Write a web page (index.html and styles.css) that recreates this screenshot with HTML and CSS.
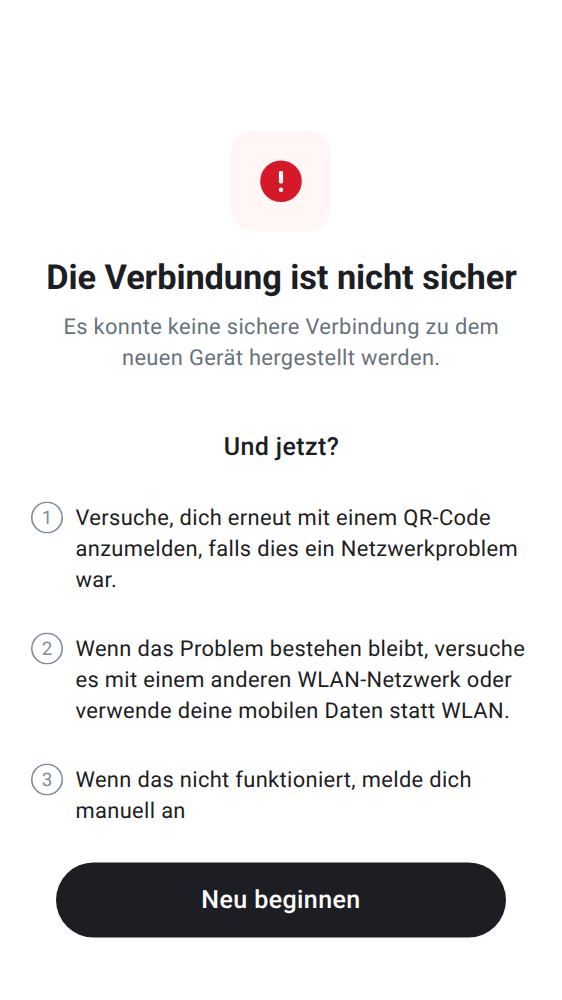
FILE: index.html
```
<!DOCTYPE html>
<html lang="de">
<head>
<meta charset="utf-8">
<title>Die Verbindung ist nicht sicher</title>
<link rel="stylesheet" href="styles.css">
</head>
<body>
<main class="screen">
  <div class="badge">
    <svg class="badge-icon" viewBox="0 0 42 42" aria-hidden="true">
      <circle cx="21" cy="21.2" r="20.8" fill="#d51928"/>
      <rect x="18.9" y="11" width="4.2" height="12.4" rx="1.4" fill="#fff"/>
      <circle cx="21" cy="29.7" r="2.2" fill="#fff"/>
    </svg>
  </div>
  <h1 class="title">Die Verbindung ist nicht sicher</h1>
  <p class="subtitle">Es konnte keine sichere Verbindung zu dem<br>neuen Gerät hergestellt werden.</p>
  <h2 class="question">Und jetzt?</h2>
  <ol class="steps">
    <li class="step"><span class="number">1</span><p class="text">Versuche, dich erneut mit einem QR-Code<br>anzumelden, falls dies ein Netzwerkproblem<br>war.</p></li>
    <li class="step"><span class="number">2</span><p class="text">Wenn das Problem bestehen bleibt, versuche<br>es mit einem anderen WLAN-Netzwerk oder<br>verwende deine mobilen Daten statt WLAN.</p></li>
    <li class="step"><span class="number">3</span><p class="text">Wenn das nicht funktioniert, melde dich<br>manuell an</p></li>
  </ol>
  <button class="restart">Neu beginnen</button>
</main>
</body>
</html>
```
FILE: styles.css
```
* { box-sizing: border-box; }
body { margin: 0; background: #fff; color: #1d1e23; font-family: Roboto, sans-serif; text-rendering: geometricPrecision; }
.screen { height: 1000px; padding: 131px 31px 0; display: flex; flex-direction: column; align-items: center; overflow: hidden; white-space: nowrap; }
.badge { width: 100px; height: 100px; flex: none; border-radius: 22px; background: #fff6f5; display: grid; place-items: center; }
.badge-icon { width: 42px; height: 42px; }
.title { margin: 25px 0 0; padding-left: 1px; font-size: 34.375px; line-height: 44px; font-weight: 700; letter-spacing: -0.07px; }
.subtitle { margin: 12px 0 0; padding-left: 0.5px; font-size: 21.875px; line-height: 31px; letter-spacing: 0.35px; color: #68727e; text-align: center; }
.question { margin: 56px 0 0; padding-left: 1px; font-size: 25px; line-height: 36px; font-weight: 500; letter-spacing: 0.38px; }
.steps { width: 500px; margin: 36px 0 0; padding: 0; list-style: none; display: flex; flex-direction: column; gap: 37px; }
.step { display: flex; gap: 12.5px; }
.number { width: 32px; height: 32px; flex: none; border-radius: 50%; box-shadow: inset 0 0 0 1.6px #818c99; color: #818c99; font-size: 18.75px; line-height: 32px; text-align: center; transform: translateY(-0.5px); }
.text { margin: 0; padding-top: 1px; font-size: 21.875px; line-height: 31px; letter-spacing: 0.35px; }
.restart { width: 450px; height: 75px; flex: none; margin: 35px 0 0; padding: 0; border: 0; border-radius: 38px; background: #1d1e23; color: #fff; font: 500 25px/75px Roboto, sans-serif; letter-spacing: 0.42px; text-rendering: geometricPrecision; transform: translateY(0.5px); }
```
